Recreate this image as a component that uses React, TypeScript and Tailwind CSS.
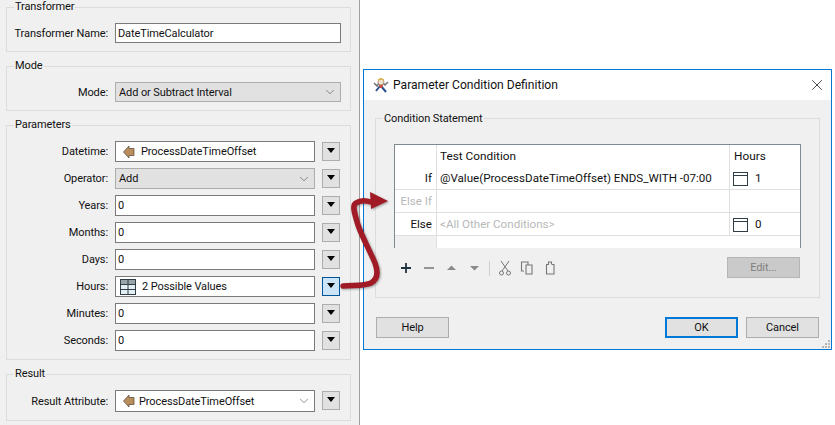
import type { ReactNode } from "react";
import { ChevronDown, X } from "lucide-react";

function Group({ title, children }: { title: string; children: ReactNode }) {
  return (
    <fieldset className="w-[345px] border border-[#dcdcdc] pb-[8px]">
      <legend className="ml-[7px] h-[14px] px-[1px] leading-[14px]">{title}</legend>
      <div className="mt-[9px]">{children}</div>
    </fieldset>
  );
}

function AttrIcon() {
  return (
    <svg width="12" height="14" viewBox="0 0 12 14" className="shrink-0">
      <path d="M0.5 7 L6 1 L6 3.5 L11 3.5 L11 10.5 L6 10.5 L6 13 Z" fill="#b98d5c" stroke="#5f5141" strokeWidth="0.8" />
    </svg>
  );
}

function TableIcon() {
  return (
    <svg width="16" height="16" viewBox="0 0 16 16" className="shrink-0">
      <rect x="0.5" y="0.5" width="15" height="15" fill="#e4eff5" stroke="#2f3e46" />
      <rect x="1" y="1" width="14" height="4.5" fill="#9aa5aa" />
      <path d="M0.5 5.5 H15.5 M0.5 10.5 H15.5 M8 0.5 V15.5" stroke="#2f3e46" fill="none" />
    </svg>
  );
}

function DropButton({ active = false }: { active?: boolean }) {
  return (
    <div
      className={`ml-[7px] mt-[1px] flex h-[19px] w-[18px] shrink-0 items-center justify-center self-start border ${
        active ? "border-[#005499] bg-[#cce4f7]" : "border-[#adadad] bg-[#e1e1e1]"
      }`}
    >
      <div className="mb-[3px] h-0 w-0 border-x-[4.5px] border-t-[5px] border-x-transparent border-t-black" />
    </div>
  );
}

function Row({ label, children }: { label: string; children: ReactNode }) {
  return (
    <div className="flex h-[21px] items-center">
      <div className="w-[101px] pt-[2px] text-right">{label}</div>
      <div className="ml-[7px] flex h-[21px] w-[200px] items-center gap-[6px] border border-[#7a7a7a] bg-white pl-[2px] pt-[2px]">
        {children}
      </div>
      <DropButton active={label === "Hours:"} />
    </div>
  );
}

function Combo({ children }: { children: ReactNode }) {
  return (
    <div className="flex h-full w-full items-center justify-between border border-[#adadad] bg-[#e1e1e1] pl-[3px] pr-[3px]">
      <span className="pt-[2px]">{children}</span>
      <ChevronDown size={14} strokeWidth={1} className="text-[#444]" />
    </div>
  );
}

function WinButton({ children, className = "" }: { children: ReactNode; className?: string }) {
  return (
    <div className={`flex h-[21px] w-[73px] items-center justify-center border bg-[#e1e1e1] pt-[2px] ${className}`}>
      {children}
    </div>
  );
}

function WizardIcon() {
  return (
    <svg width="16" height="16" viewBox="0 0 16 16" className="shrink-0">
      <path d="M3 14 L7 9 M13 15 L8 9" stroke="#2a4f8f" strokeWidth="2" />
      <path d="M1 6 L4 9 L6 6 M15 5 L12 8 L10 6" stroke="#6f757a" strokeWidth="1.5" fill="none" />
      <circle cx="8" cy="5" r="3" fill="#efe2cf" stroke="#8b6f55" strokeWidth="0.7" />
      <path d="M5 3.5 Q8 0 11 3.5" stroke="#d8b24a" strokeWidth="1.4" fill="none" />
      <path d="M6 8 L10 8 L9 11 L7 11 Z" fill="#d24a34" />
    </svg>
  );
}

function TableRow({ label, dim, children, hours }: { label: string; dim?: boolean; children?: ReactNode; hours?: string }) {
  return (
    <div className="grid h-[23px] grid-cols-[41px_293px_1fr] border-b border-[#dfdfdf] bg-white text-[11.6px] leading-[23px] tracking-normal">
      <div className={`pr-[4px] text-right ${dim ? "text-[#b8b8b8]" : ""}`}>{label}</div>
      <div className="border-l border-[#dfdfdf] pl-[3px]">{children}</div>
      <div className="flex items-center border-l border-[#dfdfdf] pl-[3px]">
        {hours && (
          <>
            <svg width="15" height="14" viewBox="0 0 15 14">
              <rect x="0.5" y="0.5" width="14" height="13" fill="none" stroke="#2f3e46" />
              <path d="M0.5 3.5 H14.5" stroke="#2f3e46" />
            </svg>
            <span className="ml-[7px]">{hours}</span>
          </>
        )}
      </div>
    </div>
  );
}

export default function App() {
  return (
    <div className="relative flex h-[425px] w-[835px] overflow-hidden whitespace-nowrap bg-white font-['Roboto',sans-serif] text-[11px] tracking-[-0.1px] text-[#111]">
      <aside className="flex h-full w-[360px] shrink-0 flex-col gap-[7px] border-r border-[#a0a0a0] bg-[#f0f0f0] pl-[6px]">
        <Group title="Transformer">
          <div className="flex h-[20px] items-center">
            <div className="w-[101px] pt-[2px] text-right">Transformer Name:</div>
            <div className="ml-[7px] flex h-full w-[226px] items-center border border-[#7a7a7a] bg-white pl-[2px] pt-[2px]">DateTimeCalculator</div>
          </div>
        </Group>
        <Group title="Mode">
          <div className="flex h-[20px] items-center">
            <div className="w-[101px] pt-[2px] text-right">Mode:</div>
            <div className="ml-[7px] h-full w-[226px]">
              <Combo>Add or Subtract Interval</Combo>
            </div>
          </div>
        </Group>
        <Group title="Parameters">
          <div className="flex flex-col gap-[6px]">
            <Row label="Datetime:">
              <span className="mb-[2px] ml-[5px] flex"><AttrIcon /></span>
              <span>ProcessDateTimeOffset</span>
            </Row>
            <div className="flex h-[21px] items-center">
              <div className="w-[101px] pt-[2px] text-right">Operator:</div>
              <div className="ml-[7px] h-[21px] w-[200px]">
                <Combo>Add</Combo>
              </div>
              <DropButton />
            </div>
            <Row label="Years:">0</Row>
            <Row label="Months:">0</Row>
            <Row label="Days:">0</Row>
            <Row label="Hours:">
              <span className="mb-[2px] ml-[2px] flex"><TableIcon /></span>
              <span>2 Possible Values</span>
            </Row>
            <Row label="Minutes:">0</Row>
            <Row label="Seconds:">0</Row>
          </div>
        </Group>
        <Group title="Result">
          <div className="flex h-[22px] items-center">
            <div className="w-[101px] pt-[2px] text-right">Result Attribute:</div>
            <div className="ml-[7px] flex h-[22px] w-[200px] items-center border border-[#7a7a7a] bg-white pl-[7px] pr-[3px]">
              <AttrIcon />
              <span className="ml-[4px] flex-1 pt-[2px]">ProcessDateTimeOffset</span>
              <ChevronDown size={14} strokeWidth={1} className="text-[#444]" />
            </div>
            <DropButton />
          </div>
        </Group>
      </aside>

      <section className="ml-[3px] mt-[69px] flex h-[281px] w-[469px] shrink-0 flex-col self-start border border-[#0078d7] bg-[#f0f0f0]">
        <header className="flex h-[30px] shrink-0 items-center bg-white pl-[9px] pr-[5px]">
          <WizardIcon />
          <span className="ml-[4px] flex-1 pt-[1px] text-[12.1px] tracking-normal">Parameter Condition Definition</span>
          <X size={18} strokeWidth={1} className="text-[#111]" />
        </header>
        <div className="flex flex-1 flex-col px-[11px]">
          <fieldset className="mt-[11px] h-[187px] border border-[#dcdcdc] px-[18px]">
            <legend className="ml-[-11px] h-[14px] px-[1px] pt-[1px] leading-[14px]">Condition Statement</legend>
            <div className="mt-[19px] h-[104px] border border-[#7f8a90]">
              <div className="grid h-[22px] grid-cols-[41px_293px_1fr] bg-white text-[11.8px] leading-[22px] tracking-normal">
                <div />
                <div className="border-l border-[#dfdfdf] pl-[3px]">Test Condition</div>
                <div className="border-l border-[#dfdfdf] pl-[4px]">Hours</div>
              </div>
              <TableRow label="If" hours="1">@Value(ProcessDateTimeOffset) ENDS_WITH -07:00</TableRow>
              <TableRow label="Else If" dim />
              <TableRow label="Else" hours="0">
                <span className="text-[#b8b8b8]">&lt;All Other Conditions&gt;</span>
              </TableRow>
              <div className="grid h-[12px] grid-cols-[41px_1fr]">
                <div className="bg-[#f0f0f0]" />
                <div className="border-l border-[#dfdfdf] bg-white" />
              </div>
            </div>
            <div className="mt-[9px] flex h-[22px] items-start">
              <svg width="170" height="22" viewBox="0 0 170 22" className="ml-[3px] shrink-0">
                <path d="M9 6 V16 M4 11 H14" stroke="#1f3440" strokeWidth="1.8" />
                <path d="M27 11 H37" stroke="#8a8a8a" strokeWidth="1.8" />
                <path d="M50 13 L54.5 8.5 L59 13 Z" fill="#8a8a8a" />
                <path d="M73 9 L82 9 L77.5 13.5 Z" fill="#8a8a8a" />
                <path d="M92.5 4 V19" stroke="#cfcfcf" />
                <path d="M104 4 L111 14 M112 4 L105 14" stroke="#777" strokeWidth="1" fill="none" />
                <circle cx="104.5" cy="16" r="2" fill="none" stroke="#777" />
                <circle cx="111.5" cy="16" r="2" fill="none" stroke="#777" />
                <path d="M127 14 H124.5 V5 H131 V8 M129 8 H135 V17 H129 Z" fill="none" stroke="#777" strokeWidth="1.1" />
                <path d="M155 7.5 H157 V17 H149.5 V7.5 H152 M151.5 7.5 V5 H154.5 V7.5" fill="none" stroke="#777" strokeWidth="1.1" />
              </svg>
              <div className="ml-auto mr-[1px] flex h-[21px] w-[73px] items-center justify-center border border-[#b5b5b5] bg-[#cacaca] pt-[2px] text-[#808080]">Edit...</div>
            </div>
          </fieldset>
          <div className="mt-[19px] flex">
            <WinButton className="ml-[1px] border-[#adadad]">Help</WinButton>
            <WinButton className="ml-auto border-2 border-[#0078d7]">OK</WinButton>
            <WinButton className="ml-[8px] mr-[1px] border-[#adadad]">Cancel</WinButton>
          </div>
        </div>
      </section>

      <svg width="60" height="110" viewBox="0 0 60 110" className="absolute left-[335px] top-[185px] drop-shadow-[1px_1px_1px_rgba(0,0,0,0.35)]">
        <path
          d="M8 101 C20 100 30 101 36 98 C43 94 43 86 40 78 C35 66 28 54 23 40 C19 27 17 20 21 18 C25 15 30 15 36 17"
          fill="none"
          stroke="#a01b26"
          strokeWidth="5.5"
          strokeLinecap="round"
        />
        <path d="M35 7 L53 16 L36 24 Z" fill="#a01b26" />
      </svg>
      <div className="absolute left-[822px] top-[340px] grid grid-cols-3 gap-[1px]">
        <span />
        <span />
        <span className="h-[2px] w-[2px] bg-[#b5b5b5]" />
        <span />
        <span className="h-[2px] w-[2px] bg-[#b5b5b5]" />
        <span className="h-[2px] w-[2px] bg-[#b5b5b5]" />
        <span className="h-[2px] w-[2px] bg-[#b5b5b5]" />
        <span className="h-[2px] w-[2px] bg-[#b5b5b5]" />
        <span className="h-[2px] w-[2px] bg-[#b5b5b5]" />
      </div>
    </div>
  );
}
